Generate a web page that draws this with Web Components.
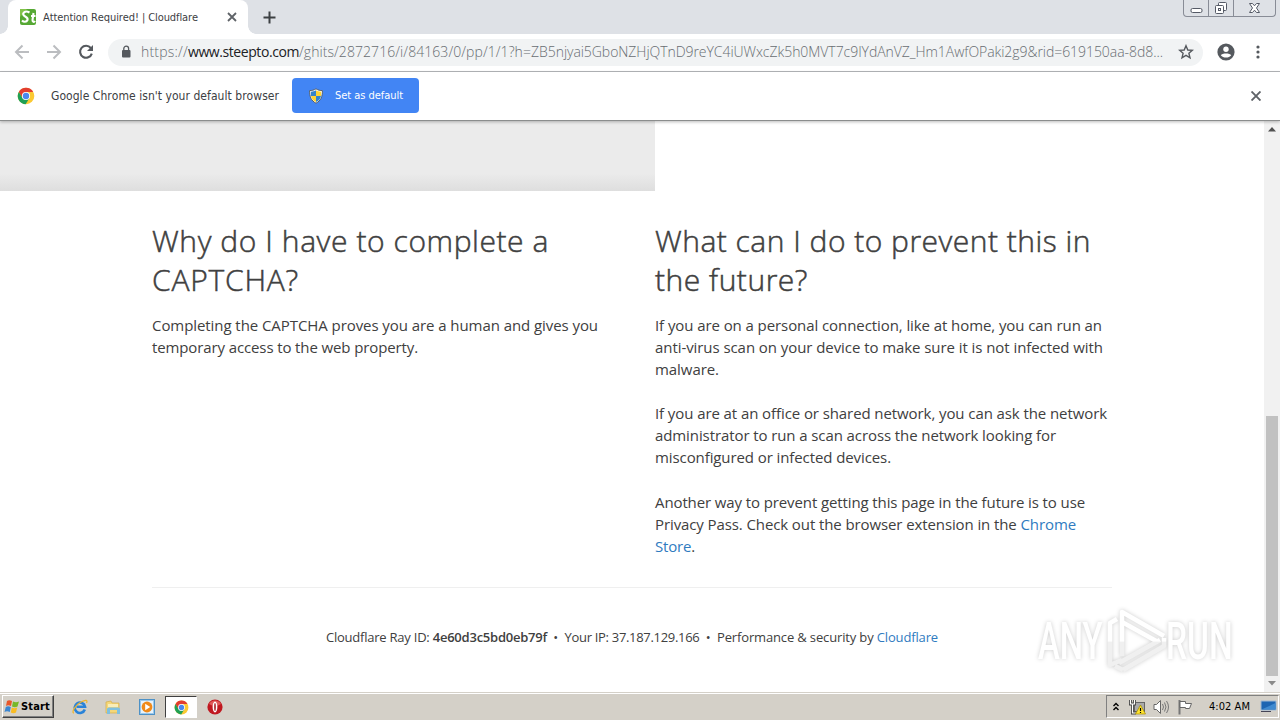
<!DOCTYPE html>
<html lang="en">
<head>
<meta charset="utf-8">
<title>Attention Required! | Cloudflare</title>
<style>
  html, body { margin: 0; height: 100%; }
  body { width: 1280px; height: 720px; overflow: hidden; background: #fff; font-family: "Open Sans", "Noto Sans", sans-serif; color: #404040; }
</style>
</head>
<body>
<desktop-screen>
  <tab-strip slot="chrome"><text-line width="155">Attention Required! | Cloudflare</text-line></tab-strip>
  <tool-bar slot="chrome">
    <text-line width="47">https://</text-line><text-line width="111" style="color:#202124;font-weight:400">www.steepto.com</text-line><text-line width="232">/ghits/2872716/i/84163/0/pp/1/1?h=</text-line><text-line width="632">ZB5njyai5GboNZHjQTnD9reYC4iUWxcZk5h0MVT7c9IYdAnVZ_Hm1AwfOPaki2g9&amp;rid=619150aa-8d8...</text-line>
  </tool-bar>
  <info-bar slot="chrome">
    <text-line width="228">Google Chrome isn't your default browser</text-line>
    <text-line slot="action" width="68">Set as default</text-line>
  </info-bar>
  <page-view>
    <faq-column>
      <text-line slot="title" width="397">Why do I have to complete a</text-line>
      <text-line slot="title" width="147">CAPTCHA?</text-line>
      <p>
        <text-line width="446">Completing the CAPTCHA proves you are a human and gives you</text-line>
        <text-line width="266">temporary access to the web property.</text-line>
      </p>
    </faq-column>
    <faq-column>
      <text-line slot="title" width="436">What can I do to prevent this in</text-line>
      <text-line slot="title" width="153">the future?</text-line>
      <p>
        <text-line width="447">If you are on a personal connection, like at home, you can run an</text-line>
        <text-line width="448">anti-virus scan on your device to make sure it is not infected with</text-line>
        <text-line width="64">malware.</text-line>
      </p>
      <p>
        <text-line width="452">If you are at an office or shared network, you can ask the network</text-line>
        <text-line width="401">administrator to run a scan across the network looking for</text-line>
        <text-line width="236">misconfigured or infected devices.</text-line>
      </p>
      <p>
        <text-line width="430">Another way to prevent getting this page in the future is to use</text-line>
        <text-line width="421">Privacy Pass. Check out the browser extension in the <a>Chrome</a></text-line>
        <text-line width="40"><a>Store</a>.</text-line>
      </p>
    </faq-column>
    <page-footer slot="footer">
      <text-line width="221">Cloudflare Ray ID: <b>4e60d3c5bd0eb79f</b></text-line>
      <i>•</i>
      <text-line width="135">Your IP: 37.187.129.166</text-line>
      <i>•</i>
      <text-line width="221">Performance &amp; security by <a>Cloudflare</a></text-line>
    </page-footer>
  </page-view>
  <any-run-mark slot="mark"></any-run-mark>
  <task-bar slot="taskbar"><text-line width="41">4:02 AM</text-line></task-bar>
</desktop-screen>

<script>
const chromeLogo = `
  <svg width="18" height="18" viewBox="0 0 18 18">
    <circle cx="9" cy="9" r="8.3" fill="#fbc932"/>
    <path d="M1.8 4.9A8.3 8.3 0 0 1 16.2 4.9H9L5.4 11Z" fill="#e23d30"/>
    <path d="M1.8 4.9A8.3 8.3 0 0 0 8.6 17.3L12.5 11.1L5.5 11.1Z" fill="#1fa055"/>
    <circle cx="9" cy="9" r="4.1" fill="#fff"/>
    <circle cx="9" cy="9" r="3.2" fill="#4a87ee"/>
  </svg>`;

function define(name, html) {
  customElements.define(name, class extends HTMLElement {
    constructor() {
      super();
      this.attachShadow({ mode: "open" }).innerHTML = html;
    }
  });
}

define("desktop-screen", `
  <style>
    :host { display: flex; flex-direction: column; width: 1280px; height: 720px; position: relative; overflow: hidden; }
  </style>
  <slot name="chrome"></slot>
  <slot></slot>
  <slot name="taskbar"></slot>
  <slot name="mark"></slot>
`);

define("tab-strip", `
  <style>
    :host { display: flex; height: 34px; background: #dee1e6; flex: none; font: 11px "DejaVu Sans Condensed", "DejaVu Sans", sans-serif; color: #3c4043; }
    .tab { display: flex; align-items: center; width: 240px; height: 34px; margin-left: 8px; background: #fff; border-radius: 8px 8px 0 0; box-sizing: border-box; padding-left: 12px; position: relative; }
    .tab::before, .tab::after { content: ""; position: absolute; bottom: 0; width: 8px; height: 8px; }
    .tab::before { left: -8px; background: radial-gradient(circle at 0 0, #dee1e6 7.5px, #fff 8px); }
    .tab::after { right: -8px; background: radial-gradient(circle at 100% 0, #dee1e6 7.5px, #fff 8px); }
    .label { margin-left: 7px; width: 183px; }
    .plus { margin: 11px 0 0 15px; }
    .controls { margin-left: auto; margin-right: 4px; display: flex; width: 91px; height: 16px; border: 1px solid #888c96; border-top: 0; border-radius: 0 0 4px 4px; }
    .controls div { display: flex; justify-content: center; width: 24px; border-right: 1px solid #888c96; }
    .controls div:last-child { flex: 1; border: 0; }
    svg { display: block; }
  </style>
  <div class="tab">
    <svg width="16" height="16" viewBox="0 0 16 16" style="flex:none">
      <rect width="16" height="16" rx="2" fill="#56a834"/><path d="M0 0H7L0 8Z" fill="#82c34a"/>
      <path d="M9.5 3.5C5 1 2.5 4 3.5 6C4.5 8 8.5 8 7.5 11C6.5 13.5 3.5 13 2 11.5M13.5 4L12.5 11C12.5 13 14 13.5 15 12M11 7H15.5" fill="none" stroke="#fff" stroke-width="2.1"/>
    </svg>
    <div class="label"><slot></slot></div>
    <svg width="10" height="10" viewBox="0 0 10 10" style="margin-left:1px"><path d="M1 1L9 9M9 1L1 9" stroke="#5f6368" stroke-width="1.8"/></svg>
  </div>
  <svg class="plus" width="13" height="13" viewBox="0 0 13 13"><path d="M6.5 .5V12.5M.5 6.5H12.5" stroke="#3c4043" stroke-width="2"/></svg>
  <div class="controls">
    <div><svg width="13" height="16"><rect x="1" y="8.5" width="11" height="4" rx="1.5" fill="#fff" stroke="#555a66"/></svg></div>
    <div><svg width="14" height="16" fill="#fff" stroke="#555a66"><rect x="4.5" y="2.5" width="8" height="8" rx="1"/><rect x="1.5" y="5.5" width="8" height="8" rx="1"/><rect x="4.5" y="8.5" width="2" height="2"/></svg></div>
    <div><svg width="13" height="16" viewBox="0 0 13 16"><path d="M1.5 3.5H4.5L6.5 5.8L8.5 3.5H11.5L8.5 8L11.5 12.5H8.5L6.5 10.2L4.5 12.5H1.5L4.5 8Z" fill="#fff" stroke="#555a66"/></svg></div>
  </div>
`);

define("tool-bar", `
  <style>
    :host { display: flex; align-items: center; height: 36px; padding-bottom: 1px; flex: none; background: #fff; border-bottom: 1px solid #b5b7ba; box-sizing: content-box; }
    .nav { display: flex; gap: 16px; margin-left: 14px; width: 94px; }
    .url { display: flex; align-items: center; width: 1095px; height: 27px; border-radius: 14px; background: #f1f3f4; font-size: 14px; font-weight: 300; color: #686d72; box-sizing: border-box; padding-left: 13px; }
    .text { display: flex; margin-left: 10px; width: 1036px; line-height: 18px; padding-bottom: 1px; }
    svg { display: block; flex: none; }
  </style>
  <div class="nav">
    <svg width="16" height="16" viewBox="0 0 16 16" fill="none" stroke="#bbbdc0" stroke-width="2"><path d="M15 8H2.5M8.5 1.5L2 8L8.5 14.5"/></svg>
    <svg width="16" height="16" viewBox="0 0 16 16" fill="none" stroke="#bbbdc0" stroke-width="2"><path d="M1 8H13.5M7.5 1.5L14 8L7.5 14.5"/></svg>
    <svg width="16" height="16" viewBox="0 0 16 16"><path d="M12.8 4A6 6 0 1 0 13.8 9.6" fill="none" stroke="#55595e" stroke-width="2.1"/><path d="M15 1V7H9Z" fill="#55595e"/></svg>
  </div>
  <div class="url">
    <svg width="10" height="14" viewBox="0 0 10 14"><rect x="1" y="5" width="8.5" height="7.5" rx="1" fill="#55595e"/><path d="M2.8 5.5V3.6a2.4 2.4 0 0 1 4.8 0V5.5" fill="none" stroke="#55595e" stroke-width="1.3"/></svg>
    <div class="text"><slot></slot></div>
    <svg width="16" height="16" viewBox="0 0 16 16" style="margin-left:1px"><path d="M8 1.7L9.8 6L14.4 6.3L10.9 9.3L12 13.8L8 11.4L4 13.8L5.1 9.3L1.6 6.3L6.2 6Z" fill="none" stroke="#55595e" stroke-width="1.4"/></svg>
  </div>
  <svg width="18" height="18" viewBox="0 0 18 18" style="margin-left:14px"><circle cx="9" cy="9" r="8.6" fill="#55595e"/><circle cx="9" cy="6.2" r="2.7" fill="#fff"/><path d="M3.8 12.2C5 9.8 13 9.8 14.2 12.2C12 15.4 6 15.4 3.8 12.2Z" fill="#fff"/></svg>
  <svg width="4" height="16" viewBox="0 0 4 16" fill="#55595e" style="margin-left:21px"><circle cx="2" cy="3" r="1.6"/><circle cx="2" cy="8" r="1.6"/><circle cx="2" cy="13" r="1.6"/></svg>
`);

define("info-bar", `
  <style>
    :host { display: flex; align-items: center; height: 47px; padding-bottom: 1px; flex: none; background: #fff; border-bottom: 1px solid #8b8d8d; font: 12px "DejaVu Sans Condensed", "DejaVu Sans", sans-serif; color: #3c4043; padding-left: 17px; box-shadow: 0 1px 3px #0004; position: relative; z-index: 1; }
    .msg { width: 241px; margin-left: 16px; }
    button { display: flex; align-items: center; width: 127px; height: 35px; border: 0; border-radius: 4px; background: #4285f4; padding: 0 0 0 16px; font: 11px "DejaVu Sans Condensed", "DejaVu Sans", sans-serif; color: #fff; }
    .action { margin-left: 11px; }
    .close { margin-left: 832px; }
  </style>
  ${chromeLogo}
  <div class="msg"><slot></slot></div>
  <button>
    <svg width="16" height="16" viewBox="0 0 16 16">
      <path d="M8 .8C5.8 2.3 3.8 2.6 1.6 2.6C1.6 8.8 3 12.6 8 15.2C13 12.6 14.4 8.8 14.4 2.6C12.2 2.6 10.2 2.3 8 .8Z" fill="#fff" stroke="#555f69"/>
      <path d="M8 2.2C6.5 3.2 4.8 3.6 2.8 3.7L3 8H8Z" fill="#3483cb"/><path d="M8 2.2C9.5 3.2 11.2 3.6 13.2 3.7L13 8H8Z" fill="#ffd334"/>
      <path d="M3 8C3.7 11 5 12.8 8 14V8Z" fill="#ffd334"/><path d="M13 8C12.3 11 11 12.8 8 14V8Z" fill="#3483cb"/>
    </svg>
    <div class="action"><slot name="action"></slot></div>
  </button>
  <svg class="close" width="10" height="10" viewBox="0 0 10 10" style="margin-top:1px"><path d="M.5 .5L9.5 9.5M9.5 .5L.5 9.5" stroke="#5f6368" stroke-width="1.9"/></svg>
`);

define("page-view", `
  <style>
    :host { display: flex; flex: 1; min-height: 0; background: #fff; }
    main { flex: 1; }
    .shot { width: 655px; height: 70px; background: linear-gradient(#ebebeb 75%, #dedede); }
    .columns { display: grid; grid-template-columns: 503px 457px; height: 397px; margin-left: 152px; width: 960px; box-sizing: border-box; padding-top: 30px; border-bottom: 1px solid #efefef; }
    .bar { display: flex; flex-direction: column; width: 16px; background: #f1f1f1; }
    .thumb { width: 12px; height: 260px; margin: 278px auto 0; background: #c1c1c1; }
    svg { display: block; }
  </style>
  <main>
    <div class="shot"></div>
    <div class="columns"><slot></slot></div>
    <slot name="footer"></slot>
  </main>
  <div class="bar">
    <svg width="16" height="17"><path d="M4 10.5L8 6L12 10.5Z" fill="#505050"/></svg>
    <div class="thumb"></div>
    <svg width="16" height="16"><path d="M4 5L8 9.5L12 5Z" fill="#8a8a8a"/></svg>
  </div>
`);

define("faq-column", `
  <style>
    :host { display: block; font-size: 15px; line-height: 22px; }
    h2 { margin: 0 0 15px; font-size: 30px; line-height: 39px; font-weight: 300; -webkit-text-stroke: .5px #404040; }
    ::slotted(p) { margin: 0 0 22.3px; }
  </style>
  <h2><slot name="title"></slot></h2>
  <slot></slot>
`);

define("page-footer", `
  <style>
    :host { display: flex; align-items: center; margin: 39px 0 0 326px; height: 20px; font-size: 13px; }
    ::slotted(i) { font-style: normal; width: 17.5px; text-align: center; }
  </style>
  <slot></slot>
`);

define("any-run-mark", `
  <style>
    :host { position: absolute; left: 1030px; top: 600px; }
    svg { display: block; overflow: visible; filter: drop-shadow(0 0 2px #0003); }
    text { font: 500 51px Roboto, sans-serif; }
  </style>
  <svg width="230" height="80" viewBox="0 0 230 80">
    <defs><linearGradient id="fade" x1="0" y1="10" x2="0" y2="72" gradientUnits="userSpaceOnUse">
      <stop offset=".5" stop-color="#fff"/><stop offset=".52" stop-color="#f0f0f0"/>
    </linearGradient></defs>
    <text transform="translate(8 59) scale(.66 1)" textLength="98" lengthAdjust="spacingAndGlyphs" fill="url(#fade)">ANY</text>
    <text transform="translate(136 59) scale(.66 1)" textLength="101" lengthAdjust="spacingAndGlyphs" fill="url(#fade)">RUN</text>
    <g fill="none" stroke="url(#fade)" stroke-width="4.5" stroke-linejoin="round">
      <path d="M92 56V12L134 36"/><path d="M87 19L80 23V65L92 60"/><path d="M92 22L128 42"/>
      <path d="M89 63L130 40"/><path d="M93 70L134 46V38"/><path d="M85 66L93 70"/>
    </g>
  </svg>
`);

define("task-bar", `
  <style>
    :host { display: flex; height: 28px; flex: none; background: #d4d0c8; border-top: 1px solid #d4d0c8; box-shadow: inset 0 1px #fff; box-sizing: border-box; padding-top: 2px; color: #000; font: 11px "DejaVu Sans Condensed", "DejaVu Sans", sans-serif; }
    .start { display: flex; align-items: center; gap: 1px; width: 52px; height: 23px; margin-left: 2px; box-sizing: border-box; border: 1px solid; border-color: #fff #404040 #404040 #fff; box-shadow: inset -1px -1px #808080; padding-left: 1px; font-weight: bold; font-size: 11px; }
    .apps { display: flex; align-items: center; margin-left: 18px; height: 24px; gap: 17px; }
    .active { display: flex; align-items: center; justify-content: center; width: 30px; height: 20px; background: #fff; border: 1px solid; border-color: #404040 #fff #fff #404040; margin: 0 -7px 0 -7px; }
    .tray { display: flex; align-items: center; margin-left: auto; width: 173px; height: 23px; margin-right: 1px; box-sizing: border-box; border: 1px solid; border-color: #808080 #fff #fff #808080; padding-left: 5px; }
    svg { display: block; flex: none; }
    .clock { margin-left: 16px; width: 51px; }
  </style>
  <div class="start">
    <svg width="16" height="16" viewBox="0 0 16 16"><path d="M3 2Q5 .5 8 2L7 7Q4 5.5 2 7Z" fill="#e8572a"/><path d="M9 2.5Q12 4 15 2.5L13.5 7.5Q11 9 8 7.5Z" fill="#76b82a"/><path d="M1.8 8Q4 6.7 6.8 8L5.8 13Q3 11.6 .5 13Z" fill="#3a86d1"/><path d="M7.8 8.5Q10.5 10 13.2 8.5L12 13.5Q9.5 15 6.8 13.5Z" fill="#f9bc22"/></svg>
    <text-line width="29">Start</text-line>
  </div>
  <div class="apps">
    <svg width="16" height="16" viewBox="0 0 16 16"><path d="M12.8 10.5A5.2 5.2 0 1 1 13 7.8H4.5" fill="none" stroke="#2a83d8" stroke-width="2.6"/><path d="M2 14C-1 14 3 6 9 3C14 .3 16 1 14.5 4" fill="none" stroke="#efb52c" stroke-width="1.2"/></svg>
    <svg width="16" height="16" viewBox="0 0 16 16"><path d="M1 3L6 2L7 4H14V14H1Z" fill="#f5d778" stroke="#d3ad4b" stroke-width=".7"/><path d="M3 5H13V8H3Z" fill="#f9edb8"/><path d="M2 15V10Q2 8.5 4 8.5H13Q15 8.5 15 10V15H12V11H5V15Z" fill="#7fc0e0"/></svg>
    <svg width="16" height="16" viewBox="0 0 16 16" style="margin-left:1px"><rect x=".5" y=".5" width="15" height="15" fill="#9bc9ec" stroke="#4d91c6"/><rect x="2" y="2" width="12" height="12" fill="#e8f3fb"/><circle cx="8" cy="8" r="5.4" fill="#f08a19"/><path d="M6.2 4.8L11.2 8L6.2 11.2Z" fill="#fff"/></svg>
    <div class="active">${chromeLogo.replace('width="18" height="18"', 'width="15" height="15"')}</div>
    <svg width="16" height="16" viewBox="0 0 16 16"><circle cx="8" cy="8" r="7.6" fill="#c01820"/><path d="M2 5A7 7 0 0 1 14 5Q8 9 2 5Z" fill="#e05a5a"/><ellipse cx="8" cy="8" rx="2.4" ry="5.4" fill="#fff"/><ellipse cx="8" cy="8" rx=".8" ry="4" fill="#a3141b"/></svg>
  </div>
  <div class="tray">
    <svg width="8" height="12" viewBox="0 0 8 12"><path d="M1.5 5L4 2.5L6.5 5M1.5 9L4 6.5L6.5 9" fill="none" stroke="#000" stroke-width="1.4"/></svg>
    <svg width="17" height="16" viewBox="0 0 17 16" style="margin-left:9px"><rect x="5.5" y="3.5" width="10" height="9" fill="#aaa" stroke="#666"/><path d="M1.5 1V5H5.5V1M3.5 5V14H7" fill="none" stroke="#444" stroke-width="3"/><path d="M1.5 1V5H5.5V1M3.5 5V14H7" fill="none" stroke="#fff" stroke-width="1.2"/><path d="M11.5 6L16.5 15H6.5Z" fill="#ffe32e" stroke="#a48a00" stroke-width=".7"/><path d="M11.5 9V12M11.5 13V14" stroke="#000" stroke-width="1.2"/></svg>
    <svg width="17" height="16" viewBox="0 0 17 16" style="margin-left:7px"><path d="M1 5.5H3.5L7.5 1.5V14.5L3.5 10.5H1Z" fill="#fff" stroke="#666"/><path d="M9.5 5Q11.5 8 9.5 11M11.5 3.5Q14.5 8 11.5 12.5M13.5 2Q17.5 8 13.5 14" fill="none" stroke="#777"/></svg>
    <svg width="16" height="16" viewBox="0 0 16 16" style="margin-left:7px"><path d="M2.5 1V15.5" stroke="#777" stroke-width="2"/><path d="M3 2.5H8.5V4.5H14.5L12.5 9.5H8.5V8.5H3Z" fill="#fff" stroke="#666"/></svg>
    <div class="clock"><slot></slot></div>
    <svg width="17" height="13" viewBox="0 0 17 13"><path d="M1 1H16V10H1Z" fill="#1d65b2" stroke="#9fb9d3"/><path d="M1.5 9.5L15.5 3V9.5Z" fill="#3f8ad0"/><path d="M1 11.5H11" stroke="#445"/></svg>
  </div>
`);

// One line of text, tracked so that it spans exactly the given width
class TextLine extends HTMLElement {
  constructor() {
    super();
    this.attachShadow({ mode: "open" }).innerHTML = `
      <style>
        :host { display: block; white-space: nowrap; }
        span { display: inline-block; font-kerning: none; font-variant-ligatures: none; }
        ::slotted(a) { color: #2f7bbf; }
        ::slotted(b) { font-weight: 600; }
      </style>
      <span><slot></slot></span>
    `;
  }

  connectedCallback() {
    const span = this.shadowRoot.querySelector("span");
    const width = Number(this.getAttribute("width"));
    this.style.width = width + "px";
    const natural = span.getBoundingClientRect().width;
    span.style.letterSpacing = (width - natural) / this.textContent.length + "px";
  }
}

customElements.define("text-line", TextLine);
</script>
</body>
</html>
